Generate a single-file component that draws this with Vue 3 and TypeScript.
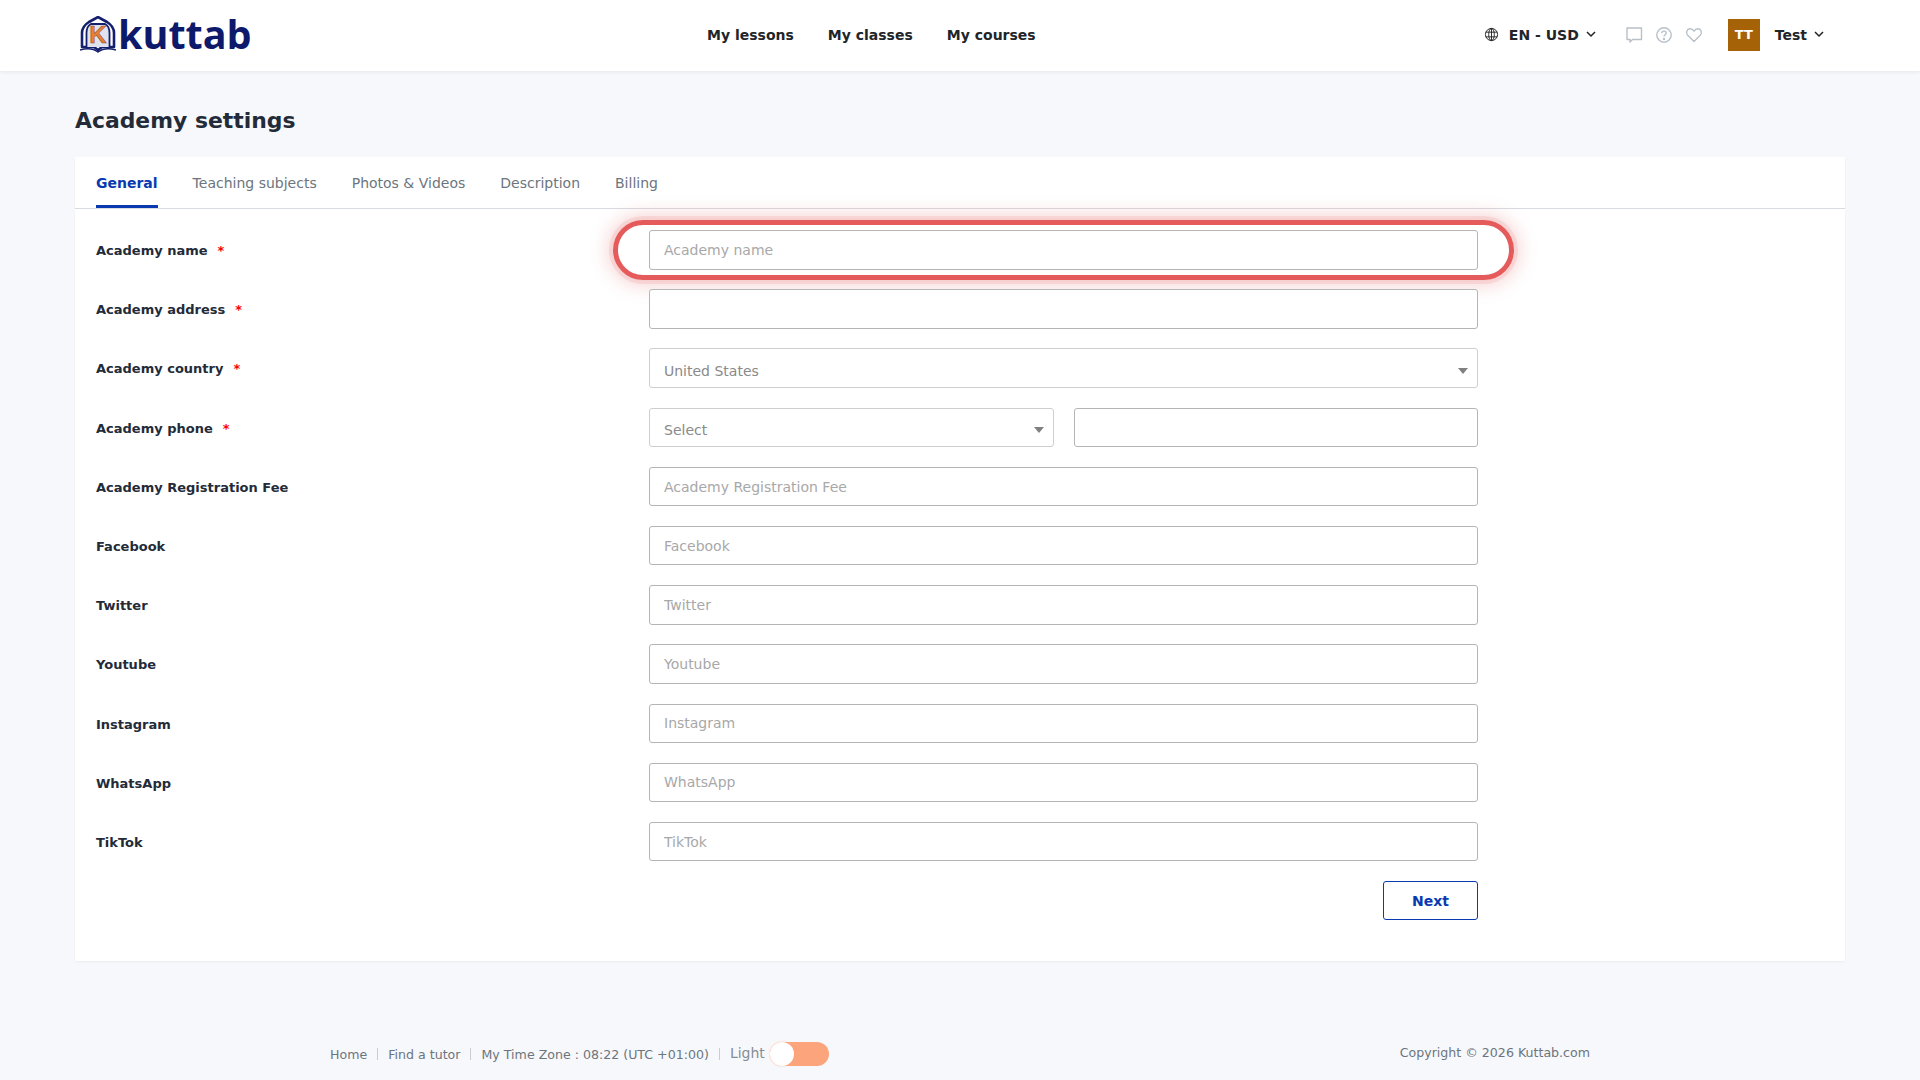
<template>
  <div class="page">
    <header class="topbar">
      <a class="logo">
        <svg class="logo-mark" width="36" height="37" viewBox="0 0 36 37">
          <path d="M18 1 L27 6 C32 9 34 12 34 17 L34 31 L22 31 L18 34 L14 31 L2 31 L2 17 C2 12 4 9 9 6 Z" fill="#fff" stroke="#141f6e" stroke-width="2.6" stroke-linejoin="round" />
          <path d="M6.500 31 V17 C6.500 12 9 9 11 8 H25 C27 9 29.500 12 29.500 17 V31" fill="#dfe3f0" stroke="#141f6e" stroke-width="1.800" />
          <text x="18" y="27" text-anchor="middle" class="logo-k">K</text>
          <path d="M0 34 C7 32 14 33 18 36 C22 33 29 32 36 34" fill="none" stroke="#141f6e" stroke-width="1.500" />
        </svg>
        <span class="logo-text">kuttab</span>
      </a>
      <nav class="main-nav">
        <a v-for="item in navItems" :key="item">{{ item }}</a>
      </nav>
      <div class="top-right">
        <div class="lang">
          <svg width="15" height="15" viewBox="0 0 16 16" fill="none" stroke="#222" stroke-width="1">
            <circle cx="8" cy="8" r="6.500" />
            <ellipse cx="8" cy="8" rx="3" ry="6.500" />
            <path d="M1.800 5.500h12.400M1.800 10.500h12.400M8 1.500v13" />
          </svg>
          <span class="lang-text">EN - USD</span>
          <svg class="chev" width="10" height="7" viewBox="0 0 10 7" fill="none" stroke="#222" stroke-width="1.500"><path d="M1 1l4 4 4-4" /></svg>
        </div>
        <div class="quick-icons">
          <svg width="18" height="18" viewBox="0 0 18 18" fill="none" stroke="#b8c0c8" stroke-width="1.400" stroke-linejoin="round">
            <path d="M2 2h14.500v11.500H7.500L5 16v-2.500H2z" />
          </svg>
          <svg width="18" height="18" viewBox="0 0 18 18" fill="none" stroke="#b8c0c8" stroke-width="1.400">
            <circle cx="9" cy="9" r="7.200" />
            <path d="M6.800 7.200c0-1.300 1-2.100 2.200-2.100s2.200.8 2.200 2c0 1.700-2.200 1.700-2.200 3.500" />
            <circle cx="9" cy="12.900" r=".5" />
          </svg>
          <svg width="18" height="18" viewBox="0 0 18 18" fill="none" stroke="#b8c0c8" stroke-width="1.400" stroke-linejoin="round">
            <path d="M9 15.500L2.500 9C.8 7 1.600 3 5 2.800c1.800-.1 3.100 1 4 2.400.9-1.400 2.200-2.500 4-2.400 3.400.2 4.200 4.200 2.500 6.200z" />
          </svg>
        </div>
        <div class="avatar">TT</div>
        <div class="user">
          <span>Test</span>
          <svg class="chev" width="10" height="7" viewBox="0 0 10 7" fill="none" stroke="#222" stroke-width="1.500"><path d="M1 1l4 4 4-4" /></svg>
        </div>
      </div>
    </header>

    <main class="content">
      <h1 class="title">Academy settings</h1>
      <section class="card">
        <div class="tabs">
          <a v-for="(tab, i) in tabs" :key="tab" class="tab" :class="{ active: i === 0 }">{{ tab }}</a>
        </div>
        <form class="form" @submit.prevent>
          <div v-for="row in rows" :key="row.label" class="row">
            <label class="label">
              {{ row.label }}<span v-if="row.required" class="req">*</span>
            </label>
            <div class="field">
              <template v-if="row.kind === 'phone'">
                <div class="select narrow"><span>Select</span><i class="caret"></i></div>
                <input class="input phone-input" type="text" />
              </template>
              <div v-else-if="row.kind === 'select'" class="select"><span>United States</span><i class="caret"></i></div>
              <input v-else class="input" type="text" :placeholder="row.placeholder" />
              <div v-if="row.ring" class="ring"></div>
            </div>
          </div>
          <div class="actions">
            <button class="next" type="button">Next</button>
          </div>
        </form>
      </section>
    </main>

    <footer class="footer">
      <div class="foot-left">
        <a>Home</a><i class="sep"></i>
        <a>Find a tutor</a><i class="sep"></i>
        <span>My Time Zone : 08:22 (UTC +01:00)</span><i class="sep"></i>
        <span class="light">Light</span>
        <span class="toggle"><b></b></span>
      </div>
      <div class="copy">Copyright © 2026 Kuttab.com</div>
    </footer>
  </div>
</template>

<script setup lang="ts">
interface Row {
  label: string
  placeholder?: string
  required?: boolean
  kind?: 'select' | 'phone'
  ring?: boolean
}

const navItems = ['My lessons', 'My classes', 'My courses']
const tabs = ['General', 'Teaching subjects', 'Photos & Videos', 'Description', 'Billing']

const rows: Row[] = [
  { label: 'Academy name', placeholder: 'Academy name', required: true, ring: true },
  { label: 'Academy address', required: true },
  { label: 'Academy country', required: true, kind: 'select' },
  { label: 'Academy phone', required: true, kind: 'phone' },
  { label: 'Academy Registration Fee', placeholder: 'Academy Registration Fee' },
  { label: 'Facebook', placeholder: 'Facebook' },
  { label: 'Twitter', placeholder: 'Twitter' },
  { label: 'Youtube', placeholder: 'Youtube' },
  { label: 'Instagram', placeholder: 'Instagram' },
  { label: 'WhatsApp', placeholder: 'WhatsApp' },
  { label: 'TikTok', placeholder: 'TikTok' }
]
</script>

<style>
body {
  margin: 0;
  background: #f7f8fc;
}
</style>

<style scoped>
.page {
  min-height: 1080px;
  display: flex;
  flex-direction: column;
  font-family: "DejaVu Sans", sans-serif;
  color: #212529;
}

.topbar {
  height: 71px;
  box-sizing: border-box;
  padding: 0 76px 2px 80px;
  background: #fff;
  box-shadow: 0 1px 4px rgba(0, 0, 0, 0.08);
  display: flex;
  align-items: center;
  position: relative;
}

.logo {
  width: 172px;
  display: flex;
  align-items: center;
  flex: none;
}

.logo-mark {
  flex: none;
}

.logo-k {
  font: 700 24px "Liberation Sans", sans-serif;
  fill: #e9803a;
  stroke: #8a4a1c;
  stroke-width: 0.5px;
}

.logo-text {
  font: 700 39.5px/1 "Open Sans", sans-serif;
  color: #0d1a6b;
  margin-left: 2px;
}

.main-nav {
  margin-left: 455px;
  display: flex;
  gap: 34px;
}

.main-nav a {
  font-size: 14px;
  font-weight: 700;
  color: #212529;
}

.top-right {
  margin-left: auto;
  display: flex;
  align-items: center;
  padding-right: 20px;
}

.lang {
  display: flex;
  align-items: center;
}

.lang-text {
  font-size: 14px;
  font-weight: 700;
  margin: 0 7px 0 10px;
}

.quick-icons {
  display: flex;
  gap: 12px;
  margin-left: 29px;
}

.avatar {
  width: 32px;
  height: 32px;
  margin-left: 25px;
  background: #a66207;
  color: #fff;
  font-size: 13px;
  font-weight: 700;
  display: flex;
  align-items: center;
  justify-content: center;
}

.user {
  display: flex;
  align-items: center;
  gap: 7px;
  margin-left: 15px;
  font-size: 14px;
  font-weight: 700;
}

.content {
  padding: 0 75px;
}

.title {
  margin: 36px 0 23px;
  font-size: 21.9px;
  line-height: 27px;
  font-weight: 700;
  color: #232b38;
}

.card {
  background: #fff;
  box-shadow: 0 1px 2px rgba(0, 0, 0, 0.05);
  height: 804px;
}

.tabs {
  display: flex;
  gap: 35px;
  padding: 0 21px;
  height: 51px;
  border-bottom: 1px solid #d8dbe0;
}

.tab {
  font-size: 14px;
  line-height: 53px;
  color: #6c757d;
  height: 51px;
  box-sizing: border-box;
}

.tab.active {
  color: #0a3ab0;
  font-weight: 700;
  border-bottom: 3px solid #0a3ab0;
}

.form {
  padding: 21px 21px 0;
}

.row {
  display: flex;
  align-items: center;
  height: 39.5px;
  margin-bottom: 19.7px;
}

.label {
  width: 553px;
  flex: none;
  padding-top: 1.6px;
  font-size: 13px;
  font-weight: 700;
  color: #232b38;
}

.req {
  color: #f00;
  margin-left: 10px;
}

.field {
  width: 829px;
  display: flex;
  gap: 20px;
  position: relative;
}

.input,
.select {
  width: 100%;
  height: 39.5px;
  box-sizing: border-box;
  border: 1px solid #b5b5b5;
  border-radius: 3px;
  background: #fff;
  padding: 0 14px;
  font: 14px "DejaVu Sans", sans-serif;
  color: #495057;
  outline: none;
}

.input::placeholder {
  color: #a8a8a8;
  opacity: 1;
}

.select {
  display: flex;
  align-items: center;
  justify-content: space-between;
  border-color: #cfcfcf;
  color: #8a8a8a;
  padding: 5px 9px 0 14px;
}

.select.narrow {
  width: 405px;
  flex: none;
}

.phone-input {
  width: 404px;
  flex: none;
}

.caret {
  width: 0;
  height: 0;
  border-left: 5px solid transparent;
  border-right: 5px solid transparent;
  border-top: 6px solid #808080;
}

.ring {
  position: absolute;
  left: -36px;
  right: -36px;
  top: -10px;
  bottom: -10px;
  border: 5px solid #e55a5a;
  border-radius: 30px;
  box-shadow: 0 0 0 4px rgba(229, 90, 90, 0.12), 0 0 18px 6px rgba(229, 90, 90, 0.25);
  pointer-events: none;
}

.actions {
  width: 1382px;
  display: flex;
  justify-content: flex-end;
}

.next {
  width: 95px;
  height: 39px;
  border: 1px solid #0a3ab0;
  border-radius: 3px;
  background: #fff;
  color: #0a3ab0;
  font: 700 14px "DejaVu Sans", sans-serif;
}

.footer {
  margin-top: auto;
  height: 39px;
  padding: 0 330px;
  display: flex;
  align-items: flex-start;
  justify-content: space-between;
  font-size: 12.6px;
  color: #6c757d;
}

.foot-left {
  display: flex;
  align-items: center;
  height: 26px;
}

.sep {
  width: 1px;
  height: 12px;
  background: #ccc;
  margin: 0 10px;
}

.light {
  font-size: 14px;
  margin-top: -2px;
  color: #868e96;
}

.toggle {
  width: 59px;
  height: 24px;
  border-radius: 12px;
  background: #fca57c;
  margin-left: 5px;
  position: relative;
}

.toggle b {
  position: absolute;
  left: 0;
  top: 0;
  width: 24px;
  height: 24px;
  border-radius: 50%;
  background: #fff;
  box-shadow: 0 0 2px rgba(252, 165, 124, 0.6);
}

.copy {
  line-height: 23px;
}
</style>
